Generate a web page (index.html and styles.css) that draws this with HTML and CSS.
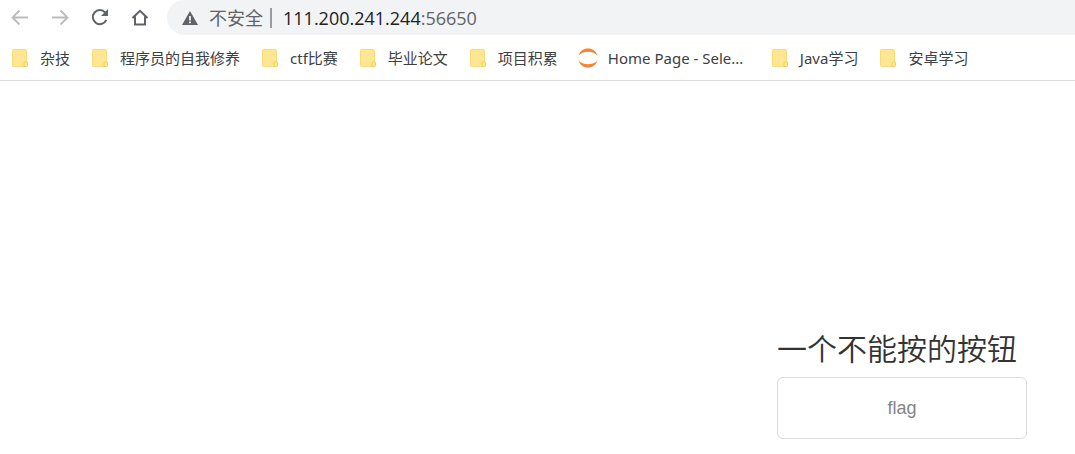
FILE: index.html
```
<!DOCTYPE html>
<html lang="zh-CN">
<head>
    <meta charset="UTF-8">
    <meta name="viewport" content="width=device-width, initial-scale=1.0">
    <title>一个不能按的按钮</title>
    <link rel="stylesheet" href="styles.css">
</head>
<body>
    <svg class="sprite" aria-hidden="true">
        <symbol id="folder" viewBox="0 0 20 20">
            <rect x="2.500" y="1.500" width="14" height="17" rx="1" fill="#ffe694" stroke="#fbdc74"/>
            <path d="M14 18.500v-3.500a1.800 1.800 0 0 1 3.500 0v2.500a1 1 0 0 1-1 1z" fill="#ffe88f" stroke="#f5cf4f"/>
        </symbol>
    </svg>

    <header>
        <div class="toolbar">
            <button class="nav off" aria-label="后退">
                <svg viewBox="0 0 20 20"><path d="M18 9.500H3M9.500 2.500l-7 7 7 7" fill="none" stroke="currentColor" stroke-width="1.800"/></svg>
            </button>
            <button class="nav off" aria-label="前进">
                <svg viewBox="0 0 20 20"><path d="M2 9.500h15M10.500 2.500l7 7-7 7" fill="none" stroke="currentColor" stroke-width="1.800"/></svg>
            </button>
            <button class="nav" aria-label="刷新">
                <svg viewBox="0 0 20 20"><path d="M16.300 11.800A7 7 0 1 1 15.200 4.600" fill="none" stroke="currentColor" stroke-width="2"/><path d="M18 1v7h-7z" fill="currentColor"/></svg>
            </button>
            <button class="nav" aria-label="主页">
                <svg viewBox="0 0 20 20"><path d="M2.500 10L10 2.800l7.500 7.200M5 8.500v8h10v-8" fill="none" stroke="currentColor" stroke-width="2"/></svg>
            </button>
            <div class="address">
                <svg viewBox="0 0 16 16"><path d="M8 1l8 14H0z" fill="#5f6368"/><path d="M7.100 6h1.800v4.500H7.100zM7.100 11.500h1.800v1.800H7.100z" fill="#f1f3f4"/></svg>
                <span class="warn">不安全</span>
                <span class="url"><b>111.200.241.244</b>:56650</span>
            </div>
        </div>
        <nav class="bookmarks">
            <a href="#"><svg><use href="#folder"/></svg><span>杂技</span></a>
            <a href="#"><svg><use href="#folder"/></svg><span>程序员的自我修养</span></a>
            <a href="#"><svg><use href="#folder"/></svg><span>ctf比赛</span></a>
            <a href="#"><svg><use href="#folder"/></svg><span>毕业论文</span></a>
            <a href="#"><svg><use href="#folder"/></svg><span>项目积累</span></a>
            <a href="#">
                <svg viewBox="0 0 20 20"><path d="M0.500 7.500C2 3 5.500 0.500 10 0.500s8 2.500 9.500 7C17.300 5 14 3.700 10 3.700S2.700 5 0.500 7.500zM0.500 12.500C2 17 5.500 19.500 10 19.500s8-2.500 9.500-7C17.300 15 14 16.300 10 16.300S2.700 15 0.500 12.500z" fill="#f9812f"/></svg>
                <span class="long">Home Page - Sele...</span>
            </a>
            <a href="#"><svg><use href="#folder"/></svg><span>Java学习</span></a>
            <a href="#"><svg><use href="#folder"/></svg><span>安卓学习</span></a>
        </nav>
    </header>

    <main>
        <div class="box">
            <h3>一个不能按的按钮</h3>
            <button class="flag" disabled>flag</button>
        </div>
    </main>
</body>
</html>
```
FILE: styles.css
```
* {
    box-sizing: border-box;
}

body {
    margin: 0;
    background-color: #fff;
    color: #333;
    font-family: "Open Sans", "Noto Sans CJK SC", sans-serif;
}

.sprite {
    display: none;
}

header {
    border-bottom: 1px solid #dadada;
}

.toolbar {
    display: flex;
    align-items: center;
    gap: 20px;
    padding-left: 10px;
}

.nav {
    width: 20px;
    height: 20px;
    padding: 0;
    border: none;
    background: none;
    color: #5f6368;
}

.nav.off {
    color: #babcbe;
}

.nav svg {
    display: block;
    width: 20px;
    height: 20px;
}

.address {
    display: flex;
    flex: 1;
    align-items: center;
    height: 35px;
    margin-left: -3px;
    padding-left: 15px;
    border-radius: 18px 0 0 18px;
    background-color: #f1f3f4;
    color: #5f6368;
    font-size: 18px;
    line-height: 20px;
}

.address svg {
    width: 16px;
    height: 16px;
    margin-right: 11px;
}

.warn {
    padding-right: 7px;
    border-right: 2px solid #9a9da0;
}

.url {
    margin-left: 11px;
}

.url b {
    color: #202124;
    font-weight: normal;
}

.bookmarks {
    display: flex;
    gap: 20px;
    padding: 13px 10px 12px;
    font-family: "Noto Sans", "Noto Sans CJK SC", sans-serif;
}

.bookmarks a {
    display: flex;
    align-items: center;
    gap: 10px;
    color: #3c4043;
    font-size: 15px;
    line-height: 20px;
    text-decoration: none;
    white-space: nowrap;
}

.bookmarks svg {
    width: 20px;
    height: 20px;
}

.bookmarks .long {
    width: 142px;
}

main {
    display: flex;
    justify-content: flex-end;
    padding: 248px 48px 15px 0;
}

.box {
    width: 250px;
}

h3 {
    margin: 0 0 12px;
    font-family: "Noto Sans CJK SC", sans-serif;
    font-size: 30px;
    font-weight: 350;
    line-height: 36px;
}

/* 不能按的按钮 */
.flag {
    display: block;
    width: 100%;
    height: 62px;
    border: 1px solid #dcdcdc;
    border-radius: 6px;
    background-color: #fff;
    color: #858585;
    font-family: "Liberation Sans", Arial, sans-serif;
    font-size: 18px;
}
```
